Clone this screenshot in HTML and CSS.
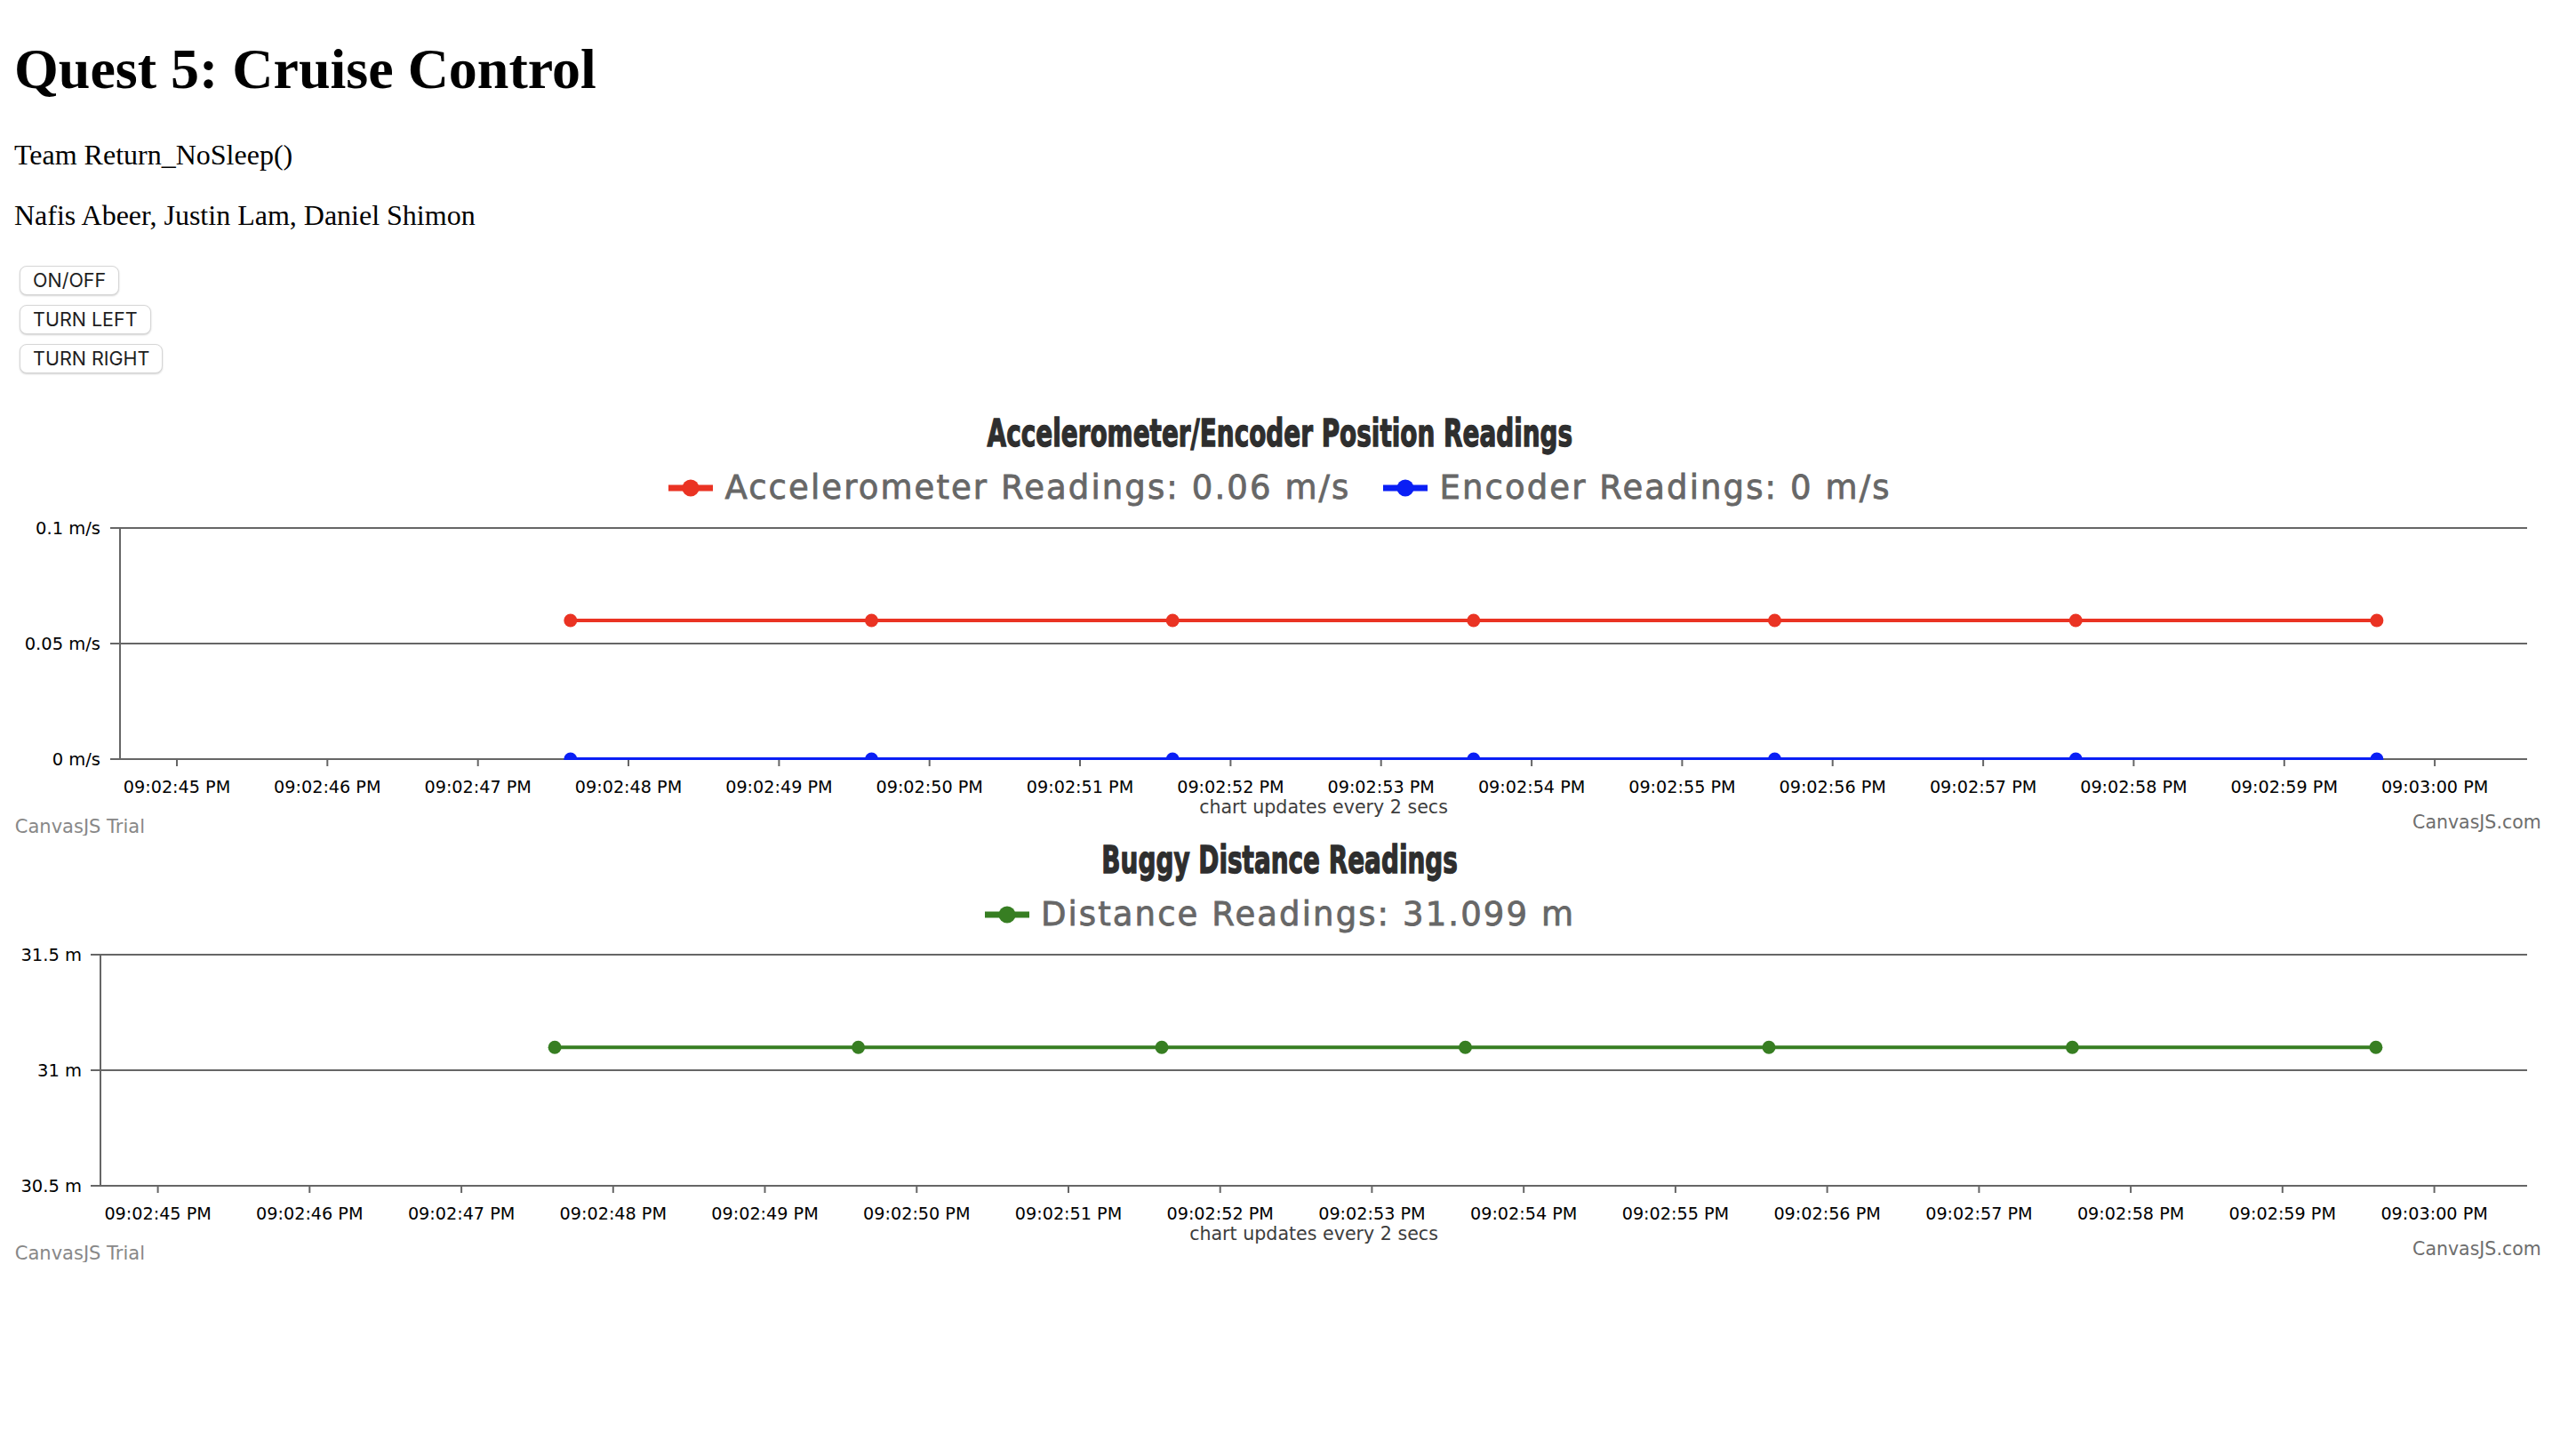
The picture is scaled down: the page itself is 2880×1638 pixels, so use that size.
FILE: index.html
```html
<!DOCTYPE html>
<html lang="en">
<head>
<meta charset="utf-8">
<title>Quest 5: Cruise Control</title>
<link rel="stylesheet" href="styles.css">
</head>
<body>
<h1>Quest 5: Cruise Control</h1>
<p>Team Return_NoSleep()</p>
<p>Nafis Abeer, Justin Lam, Daniel Shimon</p>

<div class="controls">
  <button class="btn" type="button">ON/OFF</button>
  <button class="btn" type="button">TURN LEFT</button>
  <button class="btn" type="button">TURN RIGHT</button>
</div>

<section class="charts">
  <div class="chart">
    <div class="chart-head">
      <div class="chart-title"><span>Accelerometer/Encoder Position Readings</span></div>
      <div class="legend">
        <div class="legend-item">
          <svg class="marker" width="50" height="20" viewBox="0 0 50 20"><line x1="0" y1="10" x2="50" y2="10" class="s-red" stroke-width="7"/><circle cx="25" cy="10" r="9.5" class="f-red"/></svg>
          <span>Accelerometer Readings: 0.06 m/s</span>
        </div>
        <div class="legend-item">
          <svg class="marker" width="50" height="20" viewBox="0 0 50 20"><line x1="0" y1="10" x2="50" y2="10" class="s-blue" stroke-width="7"/><circle cx="25" cy="10" r="9.5" class="f-blue"/></svg>
          <span>Encoder Readings: 0 m/s</span>
        </div>
      </div>
    </div>
    <svg class="plot" width="2848" height="360" viewBox="0 0 2848 360">
      <defs><clipPath id="clip1"><rect x="119" y="0" width="2708" height="275"/></clipPath></defs>
      <g class="grid">
        <line x1="108" y1="14" x2="2827" y2="14"/>
        <line x1="108" y1="144" x2="2827" y2="144"/>
        <line x1="108" y1="274" x2="2827" y2="274"/>
        <line x1="119" y1="13" x2="119" y2="275"/>
      </g>
      <g class="ticks">
        <line x1="183" y1="274" x2="183" y2="282"/><line x1="352.3" y1="274" x2="352.3" y2="282"/><line x1="521.7" y1="274" x2="521.7" y2="282"/><line x1="691" y1="274" x2="691" y2="282"/><line x1="860.4" y1="274" x2="860.4" y2="282"/><line x1="1029.7" y1="274" x2="1029.7" y2="282"/><line x1="1199" y1="274" x2="1199" y2="282"/><line x1="1368.4" y1="274" x2="1368.4" y2="282"/><line x1="1537.7" y1="274" x2="1537.7" y2="282"/><line x1="1707.1" y1="274" x2="1707.1" y2="282"/><line x1="1876.4" y1="274" x2="1876.4" y2="282"/><line x1="2045.7" y1="274" x2="2045.7" y2="282"/><line x1="2215.1" y1="274" x2="2215.1" y2="282"/><line x1="2384.4" y1="274" x2="2384.4" y2="282"/><line x1="2553.8" y1="274" x2="2553.8" y2="282"/><line x1="2723.1" y1="274" x2="2723.1" y2="282"/>
      </g>
      <g class="ylabels">
        <text x="97" y="21">0.1 m/s</text>
        <text x="97" y="151">0.05 m/s</text>
        <text x="97" y="281">0 m/s</text>
      </g>
      <g class="xlabels">
        <text x="183" y="312">09:02:45 PM</text><text x="352.3" y="312">09:02:46 PM</text><text x="521.7" y="312">09:02:47 PM</text><text x="691" y="312">09:02:48 PM</text><text x="860.4" y="312">09:02:49 PM</text><text x="1029.7" y="312">09:02:50 PM</text><text x="1199" y="312">09:02:51 PM</text><text x="1368.4" y="312">09:02:52 PM</text><text x="1537.7" y="312">09:02:53 PM</text><text x="1707.1" y="312">09:02:54 PM</text><text x="1876.4" y="312">09:02:55 PM</text><text x="2045.7" y="312">09:02:56 PM</text><text x="2215.1" y="312">09:02:57 PM</text><text x="2384.4" y="312">09:02:58 PM</text><text x="2553.8" y="312">09:02:59 PM</text><text x="2723.1" y="312">09:03:00 PM</text>
      </g>
      <g clip-path="url(#clip1)">
        <polyline class="series s-red" points="625.8,118 2657.9,118"/>
        <g class="f-red">
          <circle cx="625.8" cy="118" r="7.5"/><circle cx="964.5" cy="118" r="7.5"/><circle cx="1303.2" cy="118" r="7.5"/><circle cx="1641.8" cy="118" r="7.5"/><circle cx="1980.5" cy="118" r="7.5"/><circle cx="2319.2" cy="118" r="7.5"/><circle cx="2657.9" cy="118" r="7.5"/>
        </g>
        <polyline class="series s-blue" points="625.8,274 2657.9,274"/>
        <g class="f-blue">
          <circle cx="625.8" cy="274" r="7.5"/><circle cx="964.5" cy="274" r="7.5"/><circle cx="1303.2" cy="274" r="7.5"/><circle cx="1641.8" cy="274" r="7.5"/><circle cx="1980.5" cy="274" r="7.5"/><circle cx="2319.2" cy="274" r="7.5"/><circle cx="2657.9" cy="274" r="7.5"/>
        </g>
      </g>
      <text class="axis-title" x="1473" y="335">chart updates every 2 secs</text>
      <text class="credit-trial" x="0.8" y="356.5">CanvasJS Trial</text>
      <text class="credit-link" x="2842.7" y="351.5">CanvasJS.com</text>
    </svg>
  </div>

  <div class="chart">
    <div class="chart-head">
      <div class="chart-title"><span>Buggy Distance Readings</span></div>
      <div class="legend">
        <div class="legend-item">
          <svg class="marker" width="50" height="20" viewBox="0 0 50 20"><line x1="0" y1="10" x2="50" y2="10" class="s-green" stroke-width="7"/><circle cx="25" cy="10" r="9.5" class="f-green"/></svg>
          <span>Distance Readings: 31.099 m</span>
        </div>
      </div>
    </div>
    <svg class="plot" width="2848" height="360" viewBox="0 0 2848 360">
      <defs><clipPath id="clip2"><rect x="97" y="0" width="2730" height="275"/></clipPath></defs>
      <g class="grid">
        <line x1="86" y1="14" x2="2827" y2="14"/>
        <line x1="86" y1="144" x2="2827" y2="144"/>
        <line x1="86" y1="274" x2="2827" y2="274"/>
        <line x1="97" y1="13" x2="97" y2="275"/>
      </g>
      <g class="ticks">
        <line x1="161.6" y1="274" x2="161.6" y2="282"/><line x1="332.3" y1="274" x2="332.3" y2="282"/><line x1="503.1" y1="274" x2="503.1" y2="282"/><line x1="673.8" y1="274" x2="673.8" y2="282"/><line x1="844.5" y1="274" x2="844.5" y2="282"/><line x1="1015.3" y1="274" x2="1015.3" y2="282"/><line x1="1186" y1="274" x2="1186" y2="282"/><line x1="1356.7" y1="274" x2="1356.7" y2="282"/><line x1="1527.4" y1="274" x2="1527.4" y2="282"/><line x1="1698.2" y1="274" x2="1698.2" y2="282"/><line x1="1868.9" y1="274" x2="1868.9" y2="282"/><line x1="2039.6" y1="274" x2="2039.6" y2="282"/><line x1="2210.4" y1="274" x2="2210.4" y2="282"/><line x1="2381.1" y1="274" x2="2381.1" y2="282"/><line x1="2551.8" y1="274" x2="2551.8" y2="282"/><line x1="2722.6" y1="274" x2="2722.6" y2="282"/>
      </g>
      <g class="ylabels">
        <text x="76" y="21">31.5 m</text>
        <text x="76" y="151">31 m</text>
        <text x="76" y="281">30.5 m</text>
      </g>
      <g class="xlabels">
        <text x="161.6" y="312">09:02:45 PM</text><text x="332.3" y="312">09:02:46 PM</text><text x="503.1" y="312">09:02:47 PM</text><text x="673.8" y="312">09:02:48 PM</text><text x="844.5" y="312">09:02:49 PM</text><text x="1015.3" y="312">09:02:50 PM</text><text x="1186" y="312">09:02:51 PM</text><text x="1356.7" y="312">09:02:52 PM</text><text x="1527.4" y="312">09:02:53 PM</text><text x="1698.2" y="312">09:02:54 PM</text><text x="1868.9" y="312">09:02:55 PM</text><text x="2039.6" y="312">09:02:56 PM</text><text x="2210.4" y="312">09:02:57 PM</text><text x="2381.1" y="312">09:02:58 PM</text><text x="2551.8" y="312">09:02:59 PM</text><text x="2722.6" y="312">09:03:00 PM</text>
      </g>
      <g clip-path="url(#clip2)">
        <polyline class="series s-green" points="608.1,118.3 2656.9,118.3"/>
        <g class="f-green">
          <circle cx="608.1" cy="118.3" r="7.5"/><circle cx="949.6" cy="118.3" r="7.5"/><circle cx="1291" cy="118.3" r="7.5"/><circle cx="1632.5" cy="118.3" r="7.5"/><circle cx="1974" cy="118.3" r="7.5"/><circle cx="2315.4" cy="118.3" r="7.5"/><circle cx="2656.9" cy="118.3" r="7.5"/>
        </g>
      </g>
      <text class="axis-title" x="1462" y="335">chart updates every 2 secs</text>
      <text class="credit-trial" x="0.8" y="356.5">CanvasJS Trial</text>
      <text class="credit-link" x="2842.7" y="351.5">CanvasJS.com</text>
    </svg>
  </div>
</section>
</body>
</html>
```

FILE: styles.css
```css
html {
  background: #ffffff;
}

body {
  margin: 0 16px;
  font-family: "Liberation Serif", "Times New Roman", serif;
  font-size: 32px;
  color: #000000;
}

h1 {
  font-size: 64px;
  font-weight: bold;
  line-height: 70px;
  margin: 42.88px 0;
}

p {
  line-height: 36px;
  margin: 32px 0;
}

.controls {
  display: flex;
  flex-direction: column;
  align-items: flex-start;
  gap: 11px;
  padding-top: 7.5px;
}

.btn {
  margin: 0 0 0 6px;
  height: 33px;
  padding: 0 14px;
  font-family: Inter, Roboto, "Noto Sans", sans-serif;
  font-size: 21.5px;
  line-height: 1;
  color: #1e1e1e;
  background: #ffffff;
  border: 1px solid #d6d6d6;
  border-radius: 8px;
  box-shadow: 0 1px 2px rgba(0, 0, 0, 0.18);
}

.charts {
  margin-top: 40px;
}

.chart {
  height: 480px;
  display: flex;
  flex-direction: column;
}

.chart-head {
  height: 120px;
  box-sizing: border-box;
  padding-top: 6.5px;
}

.chart-title {
  height: 42px;
  line-height: 42px;
  text-align: center;
  white-space: nowrap;
}

.chart-title span {
  display: inline-block;
  font-family: "DejaVu Sans", sans-serif;
  font-weight: bold;
  font-size: 42px;
  color: #2e2e2e;
  -webkit-text-stroke: 1.4px #2e2e2e;
  transform: scaleX(0.664);
  transform-origin: 50% 50%;
}

.legend {
  margin-top: 20px;
  display: flex;
  justify-content: center;
  gap: 37px;
  height: 40px;
  line-height: 40px;
}

.legend-item {
  display: flex;
  align-items: center;
  gap: 13px;
  font-family: "DejaVu Sans", sans-serif;
  font-size: 37px;
  letter-spacing: 2.1px;
  color: #676767;
  -webkit-text-stroke: 0.8px #676767;
  white-space: nowrap;
}

.marker {
  display: block;
  flex: none;
}

.plot {
  display: block;
  flex: none;
}

.grid line,
.ticks line {
  stroke: #666666;
  stroke-width: 2;
}

.ylabels text {
  font-family: "DejaVu Sans", sans-serif;
  font-size: 19.5px;
  fill: #000000;
  text-anchor: end;
}

.xlabels text {
  font-family: "DejaVu Sans", sans-serif;
  font-size: 19.2px;
  fill: #000000;
  text-anchor: middle;
}

.series {
  fill: none;
  stroke-width: 4;
}

.s-red { stroke: #ea3323; }
.f-red { fill: #ea3323; }
.s-blue { stroke: #0a1ff5; }
.f-blue { fill: #0a1ff5; }
.s-green { stroke: #377e22; }
.f-green { fill: #377e22; }

.axis-title {
  font-family: "DejaVu Sans", sans-serif;
  font-size: 20.6px;
  fill: #3d3d3d;
  text-anchor: middle;
}

.credit-trial {
  font-family: "DejaVu Sans", sans-serif;
  font-size: 21px;
  fill: #888888;
}

.credit-link {
  font-family: "DejaVu Sans", sans-serif;
  font-size: 20.5px;
  fill: #6e6e6e;
  text-anchor: end;
}
```
